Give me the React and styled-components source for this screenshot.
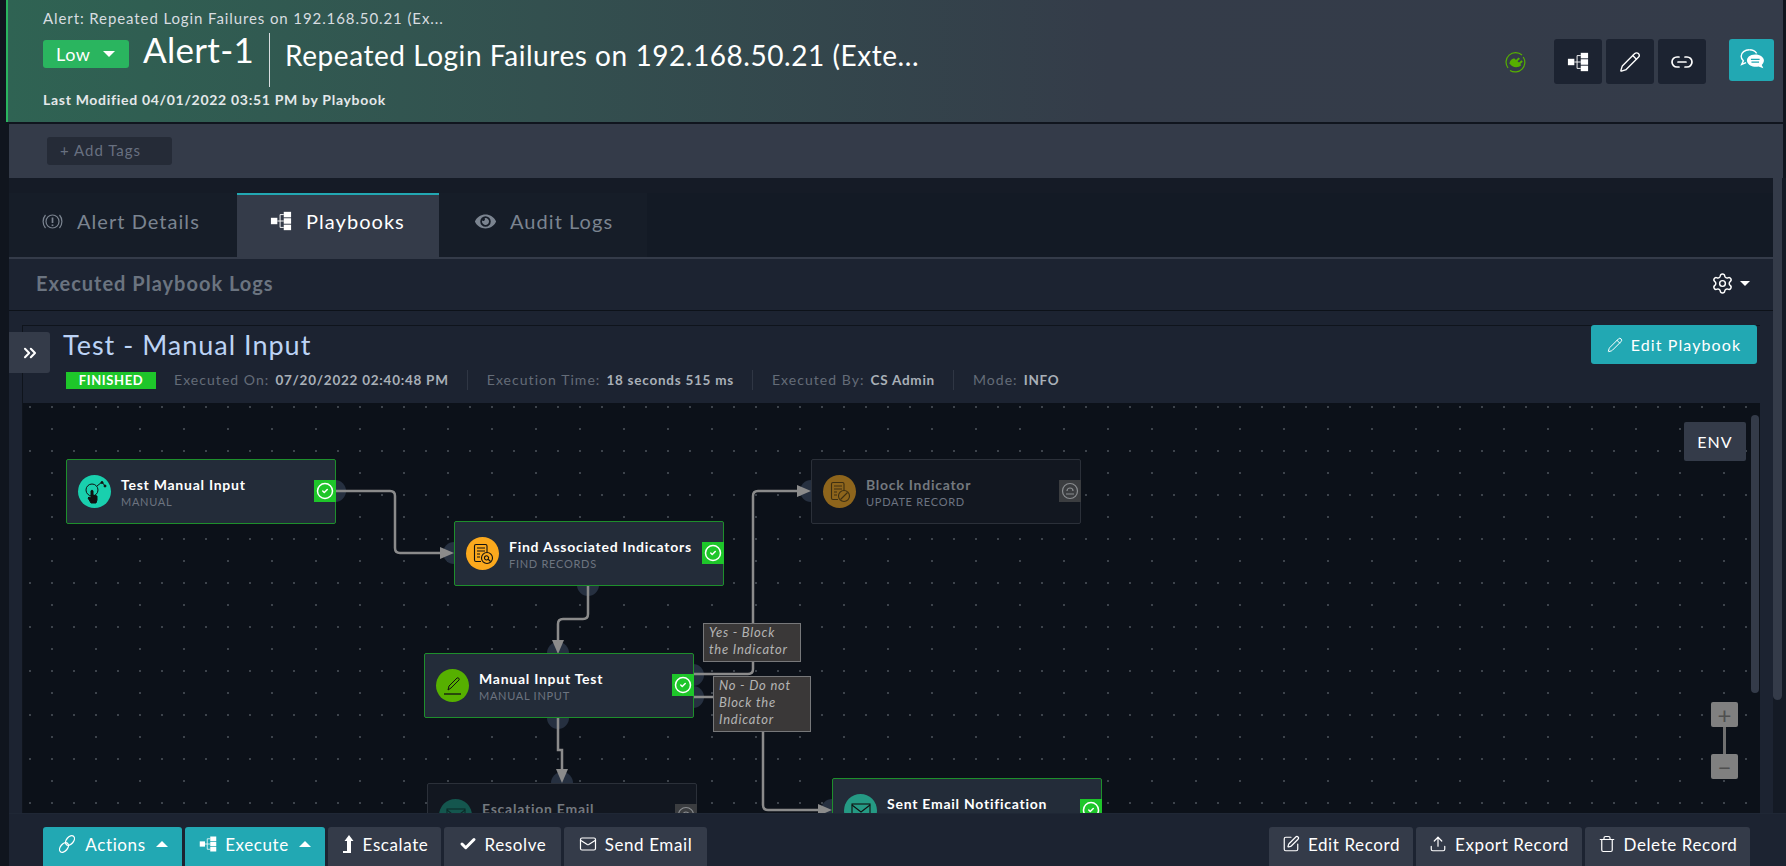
import React from "react";
import styled, { createGlobalStyle } from "styled-components";
import { CircleCheck, Pencil, Link2, Settings, ChevronsRight, Mail, SquarePen, Upload, Trash, Check } from "lucide-react";
import { FaEye } from "react-icons/fa";

const GlobalStyle = createGlobalStyle`
  html, body { margin: 0; height: 100%; background: #10151e; }
  body { font-family: Lato, "Liberation Sans", sans-serif; overflow: hidden; }
`;

const Page = styled.div`
  height: 866px;
  display: flex;
  flex-direction: column;
  overflow: hidden;
`;

/* top alert header */
const Header = styled.header`
  flex: none;
  height: 122px;
  margin: 0 3px 0 6px;
  border-left: 2px solid #2ab55f;
  display: flex;
  justify-content: space-between;
  background: linear-gradient(90deg, #2f6353 0%, #33504f 30%, #343c49 62%, #343b49 100%);
`;
const HeaderLeft = styled.div`
  padding: 9px 0 0 35px;
  color: #fff;
`;
const Crumb = styled.div`
  font-size: 15px;
  line-height: 18px;
  letter-spacing: 0.9px;
  color: #d8dde0;
`;
const TitleRow = styled.div`
  display: flex;
  align-items: center;
  height: 54px;
  margin-top: 6px;
`;
const LowBadge = styled.div`
  width: 86px;
  height: 28px;
  display: flex;
  align-items: center;
  gap: 12px;
  padding-left: 13px;
  box-sizing: border-box;
  background: #2ab55f;
  border-radius: 3px;
  font-size: 18px;
  letter-spacing: 0.6px;
  margin-bottom: 12px;
`;
const Caret = styled.span`
  width: 0;
  height: 0;
  border-left: 6px solid transparent;
  border-right: 6px solid transparent;
  border-${(p) => (p.$up ? "bottom" : "top")}: 6px solid #fff;
  margin-left: ${(p) => (p.$up ? "2px" : "0")};
`;
const AlertId = styled.div`
  margin: 0 15px 22px 14px;
  font-size: 35px;
  letter-spacing: 0.3px;
`;
const AlertName = styled.div`
  height: 54px;
  line-height: 44px;
  border-left: 1px solid #d9dde0;
  padding-left: 15px;
  font-size: 28px;
  letter-spacing: 0.55px;
`;
const Modified = styled.div`
  margin-top: 4px;
  font-size: 14px;
  line-height: 18px;
  font-weight: 700;
  letter-spacing: 0.7px;
  color: #e4e8ea;
`;
const HeaderRight = styled.div`
  display: flex;
  align-items: flex-start;
  padding: 39px 9px 0 0;
`;
const PlugIcon = styled.div`
  width: 21px;
  height: 21px;
  margin: 13px 28px 0 0;
`;
const IconButton = styled.button`
  width: 48px;
  height: 45px;
  margin-right: 4px;
  border: 0;
  border-radius: 3px;
  background: #1c2331;
  color: #fff;
  display: flex;
  align-items: center;
  justify-content: center;
  padding: 0;
`;
const ChatButton = styled(IconButton)`
  width: 45px;
  height: 42px;
  margin: 0 0 0 19px;
  background: #22a8b3;
`;

const TagBar = styled.div`
  flex: none;
  height: 54px;
  margin: 2px 3px 0 9px;
  box-sizing: border-box;
  padding: 13px 0 0 38px;
  background: #343b49;
`;
const AddTags = styled.div`
  width: 125px;
  height: 28px;
  box-sizing: border-box;
  padding-left: 13px;
  line-height: 26px;
  background: #252b37;
  border-radius: 3px;
  font-size: 15px;
  letter-spacing: 1px;
  color: #687080;
`;

const Main = styled.div`
  flex: 1;
  min-height: 0;
  margin-left: 9px;
  display: flex;
  background: #1c2331;
`;
const Content = styled.div`
  flex: 1;
  min-width: 0;
  display: flex;
  flex-direction: column;
`;
const OuterScroll = styled.div`
  flex: none;
  width: 13px;
  background: #141a25;
`;
const OuterThumb = styled.div`
  width: 9px;
  height: 522px;
  background: #343b49;
  border-radius: 0 0 5px 5px;
`;

/* tabs */
const TabBar = styled.div`
  flex: none;
  display: flex;
  height: 64px;
  background: #131a25;
  border-top: 15px solid #151b26;
  border-bottom: 2px solid #343b49;
`;
const Tab = styled.div`
  width: ${(p) => p.$width}px;
  padding: 0 0 10px ${(p) => p.$pad}px;
  box-sizing: border-box;
  display: flex;
  align-items: center;
  gap: 14px;
  font-size: 20px;
  letter-spacing: 1.05px;
  color: ${(p) => (p.$active ? "#fff" : "#7b8490")};
  background: ${(p) => (p.$active ? "#343b49" : "#161d28")};
  border-top: 2px solid ${(p) => (p.$active ? "#22a8b3" : "transparent")};
`;
const SectionRow = styled.div`
  flex: none;
  height: 52px;
  box-sizing: border-box;
  display: flex;
  align-items: center;
  justify-content: space-between;
  padding: 0 23px 3px 27px;
  border-bottom: 1px solid #0d1219;
`;
const SectionTitle = styled.h2`
  margin: 0;
  font-size: 20px;
  font-weight: 700;
  letter-spacing: 1px;
  color: #6b7480;
`;
const GearBox = styled.div`
  display: flex;
  align-items: center;
  gap: 6px;
  color: #fff;
`;
const GearCaret = styled(Caret)`
  border-left-width: 5px;
  border-right-width: 5px;
  border-top-width: 5px;
`;

const Panel = styled.div`
  flex: 1;
  min-height: 0;
  position: relative;
  margin: 14px 13px 0;
  display: flex;
  flex-direction: column;
  border-top: 1px solid #0f141c;
  border-left: 1px solid #0f141c;
`;
const Toggle = styled.div`
  position: absolute;
  left: -14px;
  top: 6px;
  width: 41px;
  height: 41px;
  background: #343b49;
  border-radius: 0 3px 3px 0;
  color: #fff;
  display: flex;
  align-items: center;
  justify-content: center;
`;
const PanelHead = styled.div`
  flex: none;
  height: 77px;
  box-sizing: border-box;
  display: flex;
  justify-content: space-between;
  padding: 0 3px 0 40px;
`;
const PlaybookTitle = styled.h1`
  margin: 0;
  font-size: 27px;
  line-height: 38px;
  font-weight: 400;
  letter-spacing: 1px;
  color: #bcd3f5;
`;
const Meta = styled.div`
  display: flex;
  align-items: center;
  margin: 6px 0 0 3px;
`;
const Finished = styled.span`
  width: 90px;
  height: 17px;
  background: #1ec62a;
  color: #fff;
  font-size: 13px;
  font-weight: 700;
  line-height: 17px;
  text-align: center;
  letter-spacing: 0.6px;
  margin-right: 18px;
`;
const MetaItem = styled.div`
  height: 20px;
  line-height: 20px;
  padding-right: 18.5px;
  margin-right: 18.5px;
  border-right: 1px solid #2f3644;
  font-size: 14px;
  letter-spacing: 1.05px;
  color: #646c78;
  &:last-child { border-right: 0; }
  b { margin-left: 6px; font-size: 13.5px; color: #a9b0b8; font-weight: 700; letter-spacing: 0.75px; }
`;
const EditPlaybook = styled.button`
  width: 166px;
  height: 39px;
  border: 0;
  border-radius: 3px;
  background: #22a8b3;
  color: #fff;
  font-family: inherit;
  font-size: 16px;
  letter-spacing: 1.1px;
  display: flex;
  align-items: center;
  justify-content: center;
  gap: 8px;
  margin-top: -1px;
`;

/* playbook canvas */
const Canvas = styled.div`
  flex: 1;
  min-height: 0;
  position: relative;
  overflow: hidden;
  background-color: #0c1119;
  background-image:
    radial-gradient(circle at center, #3d434b 0.8px, transparent 1px),
    radial-gradient(circle at center, #3d434b 0.8px, transparent 1px);
  background-size: 22px 44px, 44px 44px;
  background-position: -4px -18px, 7px 4px;
`;
const Edges = styled.svg`
  position: absolute;
  left: 0;
  top: 0;
  width: 100%;
  height: 100%;
`;
const NodeBox = styled.div`
  position: absolute;
  left: ${(p) => p.$x}px;
  top: ${(p) => p.$y}px;
  width: 270px;
  height: 65px;
  box-sizing: border-box;
  display: flex;
  align-items: center;
  padding-left: 11px;
  border-radius: 2px;
  border: 1px solid ${(p) => (p.$dim ? "#2b3039" : "#1e8f2c")};
  background: ${(p) => (p.$dim ? "#121720" : "#232c39")};
`;
const NodeIcon = styled.div`
  flex: none;
  width: 33px;
  height: 33px;
  border-radius: 50%;
  background: ${(p) => p.$color};
  display: flex;
  align-items: center;
  justify-content: center;
`;
const NodeText = styled.div`
  margin-left: 10px;
  padding-top: 2px;
`;
const NodeTitle = styled.div`
  font-size: 14px;
  line-height: 18px;
  font-weight: 700;
  letter-spacing: 0.75px;
  color: ${(p) => (p.$dim ? "#74797f" : "#fff")};
`;
const NodeSub = styled.div`
  font-size: 11px;
  line-height: 16px;
  letter-spacing: 0.72px;
  color: #6d7480;
`;
const StatusBox = styled.div`
  position: absolute;
  right: -1px;
  top: 20px;
  width: 22px;
  height: 22px;
  background: ${(p) => (p.$dim ? "#3b3d40" : "#1ec62a")};
  color: ${(p) => (p.$dim ? "#8a8d90" : "#fff")};
  display: flex;
  align-items: center;
  justify-content: center;
`;
const EdgeLabel = styled.div`
  position: absolute;
  left: ${(p) => p.$x}px;
  top: ${(p) => p.$y}px;
  width: 98px;
  box-sizing: border-box;
  padding: 0 0 3px 5px;
  background: #3a3838;
  border: 1px solid #77787a;
  font-size: 13px;
  line-height: 17px;
  font-style: italic;
  letter-spacing: 0.75px;
  color: #b4b4b4;
`;
const EnvButton = styled.div`
  position: absolute;
  right: 14px;
  top: 19px;
  width: 62px;
  height: 39px;
  line-height: 39px;
  text-align: center;
  background: #343b49;
  border-radius: 2px;
  color: #fff;
  font-size: 16px;
  letter-spacing: 1px;
`;
const InnerThumb = styled.div`
  position: absolute;
  right: 1px;
  top: 12px;
  width: 8px;
  height: 278px;
  background: #343b49;
  border-radius: 5px;
`;
const Zoom = styled.div`
  position: absolute;
  right: 22px;
  bottom: 34px;
  width: 27px;
  display: flex;
  flex-direction: column;
  align-items: center;
`;
const ZoomButton = styled.div`
  width: 27px;
  height: 25px;
  border-radius: 2px;
  background: #808080;
  color: #4f4f4f;
  display: flex;
  align-items: center;
  justify-content: center;
  font-size: 24px;
  line-height: 1;
`;
const ZoomLine = styled.div`
  width: 3px;
  height: 27px;
  background: #707070;
`;

/* bottom action bar */
const ActionBar = styled.div`
  flex: none;
  height: 53px;
  margin-left: 9px;
  box-sizing: border-box;
  padding: 13px 36px 0 34px;
  display: flex;
  justify-content: space-between;
  background: #1c2331;
  border-top: 1px solid #1f2735;
`;
const ActionGroup = styled.div`
  display: flex;
  gap: 3px;
`;
const ActionButton = styled.button`
  width: ${(p) => p.$width}px;
  height: 39px;
  border: 0;
  border-radius: 3px 3px 0 0;
  background: ${(p) => (p.$primary ? "#22a8b3" : "#343b49")};
  color: #fff;
  font-family: inherit;
  font-size: 17px;
  letter-spacing: 0.6px;
  display: flex;
  align-items: center;
  justify-content: center;
  gap: 8px;
  padding: 0 0 5px;
`;

function PlaybookIcon({ size = 24, color = "#fff" }) {
  return (
    <svg width={size} height={size} viewBox="0 0 24 24" fill={color}>
      <rect x="1" y="8.5" width="7" height="7" />
      <rect x="15" y="2" width="8" height="6" />
      <rect x="15" y="9" width="8" height="6" />
      <rect x="15" y="16" width="8" height="6" />
      <path d="M8 12h3M11 5h4M11 12h4M11 19h4M11 5v14" stroke={color} strokeWidth="1" fill="none" />
    </svg>
  );
}

function PlugGlyph() {
  return (
    <svg width="21" height="21" viewBox="0 0 21 21">
      <path d="M3 16A9.6 9.6 0 0 1 17 3M18.2 5A9.6 9.6 0 0 1 5 18.4" fill="none" stroke="#56b000" strokeWidth="1.2" />
      <path d="M4.5 12c0-3 2-5.500 5-5.500l1.500 1.500 2.500-2.500 1.500 1.300-2.500 2.500 1.500 1.200 2.500-2.200 1.300 1.400-2.500 2.300 1 1.200c-3 3-9.500 2.500-11.300-1.200z" fill="#56b000" />
    </svg>
  );
}

function ChatGlyph() {
  return (
    <svg width="26" height="24" viewBox="0 0 24 22" fill="none">
      <path d="M9.500 1.500c-4 0-7.500 2.600-7.500 6 0 1.800 1 3.300 2 4.300L2.500 15l4-1.600" stroke="#fff" strokeWidth="1.300" />
      <path d="M9.500 1.500c3 0 5.500 1.300 6.800 3.300" stroke="#fff" strokeWidth="1.300" />
      <path d="M15 6c4.500 0 8 2.500 8 5.500 0 1.700-1 3.100-2 4l1.500 3-4.500-1.600c-4.500 1-9.500-.9-10.500-4.400C6.700 9 10 6 15 6z" fill="#fff" />
      <path d="M11 10.500h8M11.500 13h7" stroke="#22a8b3" strokeWidth="1.200" />
    </svg>
  );
}

function AlertGlyph() {
  return (
    <svg width="21" height="21" viewBox="0 0 21 21" fill="none" stroke="#7b8490" strokeWidth="1.200">
      <circle cx="10.500" cy="10.500" r="6.500" />
      <path d="M3.500 4A10 10 0 0 0 3.500 17M17.500 4A10 10 0 0 1 17.500 17" />
      <path d="M10.500 6.500v5.500M10.500 13.500v1.500" strokeWidth="1.700" />
    </svg>
  );
}

function ChainGlyph() {
  return (
    <svg width="20" height="20" viewBox="0 0 20 20" fill="none" stroke="#fff" strokeWidth="1.300">
      <ellipse cx="13" cy="6.500" rx="3.500" ry="5.500" transform="rotate(40 13 6.500)" />
      <ellipse cx="7" cy="13.500" rx="3.500" ry="5.500" transform="rotate(40 7 13.500)" />
    </svg>
  );
}

function EscalateGlyph() {
  return (
    <svg width="14" height="18" viewBox="0 0 14 18" fill="#fff">
      <path d="M8 0l4.500 6H10v12H2v-2h4V6H3.500z" />
    </svg>
  );
}

function ManualGlyph() {
  return (
    <svg width="24" height="24" viewBox="0 0 24 24" fill="none" stroke="#111" strokeWidth="1">
      <circle cx="9" cy="10" r="6" />
      <path d="M14 6l5-4 3 4" />
      <circle cx="19" cy="2.500" r="1" fill="#111" />
      <circle cx="22" cy="6" r="1" fill="#111" />
      <path d="M8 11c0-1 2-1 2 0v4l4 1v4l-1 3H8l-3-5 1-1 2 1z" fill="#111" />
    </svg>
  );
}

function RecordGlyph({ color = "#111", ban }) {
  return (
    <svg width="22" height="22" viewBox="0 0 22 22" fill="none" stroke={color} strokeWidth="1.100">
      <path d="M15 9V3c0-1-1-1.500-1.500-1.500H4C3 1.500 2.500 2 2.500 3v14c0 1 .6 1.500 1.500 1.500h5" />
      <path d="M5 5h8M5 8h8M5 11h3M5 14h3" />
      <circle cx="15" cy="15" r="5.500" />
      {ban ? <path d="M11.500 18.500l7-7" /> : <path d="M16.500 16.500l2 2M13 13.500a2 2 0 1 0 3 2.800 2 2 0 0 0-3-2.800z" />}
    </svg>
  );
}

function InputGlyph() {
  return (
    <svg width="22" height="22" viewBox="0 0 22 22" fill="none" stroke="#111" strokeWidth="1">
      <path d="M6 15l1-4 8-8c1-1 3 1 2 2l-8 8z" />
      <path d="M2 19h17" strokeWidth="1.300" />
    </svg>
  );
}

function EnvelopeGlyph({ color = "#111" }) {
  return (
    <svg width="22" height="18" viewBox="0 0 22 18" fill="none" stroke={color} strokeWidth="1.100">
      <rect x="2" y="2" width="18" height="14" />
      <path d="M2 3l9 7 9-7" />
    </svg>
  );
}

function FaceGlyph() {
  return (
    <svg width="18" height="18" viewBox="0 0 18 18" fill="none" stroke="#8a8d90" strokeWidth="1.200">
      <circle cx="9" cy="9" r="7.500" />
      <path d="M5 12h8M6 9a3 3 0 0 1 6 0" />
    </svg>
  );
}

function Node({ x, y, color, icon, title, sub, dim }) {
  return (
    <NodeBox $x={x} $y={y} $dim={dim}>
      <NodeIcon $color={color}>{icon}</NodeIcon>
      <NodeText>
        <NodeTitle $dim={dim}>{title}</NodeTitle>
        <NodeSub>{sub}</NodeSub>
      </NodeText>
      <StatusBox $dim={dim}>{dim ? <FaceGlyph /> : <CircleCheck size={18} strokeWidth={2} />}</StatusBox>
    </NodeBox>
  );
}

const ports = [
  [335, 491], [454, 553], [588, 585], [558, 653], [693, 675],
  [693, 697], [558, 718], [562, 783], [811, 491], [832, 810],
];

const lines = [
  "M335 491H390Q395 491 395 496V548Q395 553 400 553H442",
  "M588 585V614Q588 619 583 619H563Q558 619 558 624V642",
  "M693 674H748Q753 674 753 669V496Q753 491 758 491H799",
  "M693 697H763V805Q763 810 768 810H820",
  "M558 718V750H562V771",
];

const arrows = [
  "454,553 440,547 440,559",
  "558,654 552,640 564,640",
  "811,491 797,485 797,497",
  "832,810 818,804 818,816",
  "562,783 556,769 568,769",
];

export default function App() {
  return (
    <Page>
      <GlobalStyle />
      <Header>
        <HeaderLeft>
          <Crumb>Alert: Repeated Login Failures on 192.168.50.21 (Ex...</Crumb>
          <TitleRow>
            <LowBadge>Low <Caret /></LowBadge>
            <AlertId>Alert-1</AlertId>
            <AlertName>Repeated Login Failures on 192.168.50.21 (Exte...</AlertName>
          </TitleRow>
          <Modified>Last Modified 04/01/2022 03:51 PM by Playbook</Modified>
        </HeaderLeft>
        <HeaderRight>
          <PlugIcon><PlugGlyph /></PlugIcon>
          <IconButton><PlaybookIcon size={22} /></IconButton>
          <IconButton><Pencil size={22} strokeWidth={1.5} /></IconButton>
          <IconButton><Link2 size={24} strokeWidth={1.7} /></IconButton>
          <ChatButton><ChatGlyph /></ChatButton>
        </HeaderRight>
      </Header>
      <TagBar><AddTags>+ Add Tags</AddTags></TagBar>
      <Main>
        <Content>
          <TabBar>
            <Tab $width={228} $pad={33}><AlertGlyph /> Alert Details</Tab>
            <Tab $width={202} $pad={33} $active><PlaybookIcon size={22} /> Playbooks</Tab>
            <Tab $width={208} $pad={36}><FaEye size={21} /> Audit Logs</Tab>
          </TabBar>
          <SectionRow>
            <SectionTitle>Executed Playbook Logs</SectionTitle>
            <GearBox>
              <Settings size={23} strokeWidth={1.5} />
              <GearCaret />
            </GearBox>
          </SectionRow>
          <Panel>
            <Toggle><ChevronsRight size={20} strokeWidth={2.5} /></Toggle>
            <PanelHead>
              <div>
                <PlaybookTitle>Test - Manual Input</PlaybookTitle>
                <Meta>
                  <Finished>FINISHED</Finished>
                  <MetaItem>Executed On:<b>07/20/2022 02:40:48 PM</b></MetaItem>
                  <MetaItem>Execution Time:<b>18 seconds 515 ms</b></MetaItem>
                  <MetaItem>Executed By:<b>CS Admin</b></MetaItem>
                  <MetaItem>Mode:<b>INFO</b></MetaItem>
                </Meta>
              </div>
              <EditPlaybook><Pencil size={16} strokeWidth={1.5} /> Edit Playbook</EditPlaybook>
            </PanelHead>
            <Canvas>
              <Edges>
                <g transform="translate(-23 -403)">
                  {ports.map(([cx, cy]) => (
                    <circle key={`${cx}-${cy}`} cx={cx} cy={cy} r="11" fill="#263040" />
                  ))}
                  {lines.map((d) => (
                    <path key={d} d={d} fill="none" stroke="#8b8b8b" strokeWidth="2.5" />
                  ))}
                  {arrows.map((points) => (
                    <polygon key={points} points={points} fill="#8b8b8b" />
                  ))}
                </g>
              </Edges>
              <Node x={43} y={56} color="#19d0ae" icon={<ManualGlyph />} title="Test Manual Input" sub="MANUAL" />
              <Node x={431} y={118} color="#fba91d" icon={<RecordGlyph />} title="Find Associated Indicators" sub="FIND RECORDS" />
              <Node x={401} y={250} color="#56b000" icon={<InputGlyph />} title="Manual Input Test" sub="MANUAL INPUT" />
              <Node x={788} y={56} dim color="#8e651c" icon={<RecordGlyph color="#3d2f12" ban />} title="Block Indicator" sub="UPDATE RECORD" />
              <Node x={404} y={380} dim color="#14564e" icon={<EnvelopeGlyph color="#0c2b28" />} title="Escalation Email" sub="SEND EMAIL" />
              <Node x={809} y={375} color="#259a84" icon={<EnvelopeGlyph />} title="Sent Email Notification" sub="SEND EMAIL" />
              <EdgeLabel $x={680} $y={220}>Yes - Block<br />the Indicator</EdgeLabel>
              <EdgeLabel $x={690} $y={273}>No - Do not<br />Block the<br />Indicator</EdgeLabel>
              <EnvButton>ENV</EnvButton>
              <InnerThumb />
              <Zoom>
                <ZoomButton>+</ZoomButton>
                <ZoomLine />
                <ZoomButton>−</ZoomButton>
              </Zoom>
            </Canvas>
          </Panel>
        </Content>
        <OuterScroll><OuterThumb /></OuterScroll>
      </Main>
      <ActionBar>
        <ActionGroup>
          <ActionButton $primary $width={139}><ChainGlyph /> Actions <Caret $up /></ActionButton>
          <ActionButton $primary $width={140}><PlaybookIcon size={18} /> Execute <Caret $up /></ActionButton>
          <ActionButton $width={113}><EscalateGlyph /> Escalate</ActionButton>
          <ActionButton $width={117}><Check size={18} strokeWidth={4} /> Resolve</ActionButton>
          <ActionButton $width={143}><Mail size={18} strokeWidth={1.6} /> Send Email</ActionButton>
        </ActionGroup>
        <ActionGroup>
          <ActionButton $width={144}><SquarePen size={18} strokeWidth={1.6} /> Edit Record</ActionButton>
          <ActionButton $width={166}><Upload size={18} strokeWidth={1.6} /> Export Record</ActionButton>
          <ActionButton $width={165}><Trash size={18} strokeWidth={1.6} /> Delete Record</ActionButton>
        </ActionGroup>
      </ActionBar>
    </Page>
  );
}
